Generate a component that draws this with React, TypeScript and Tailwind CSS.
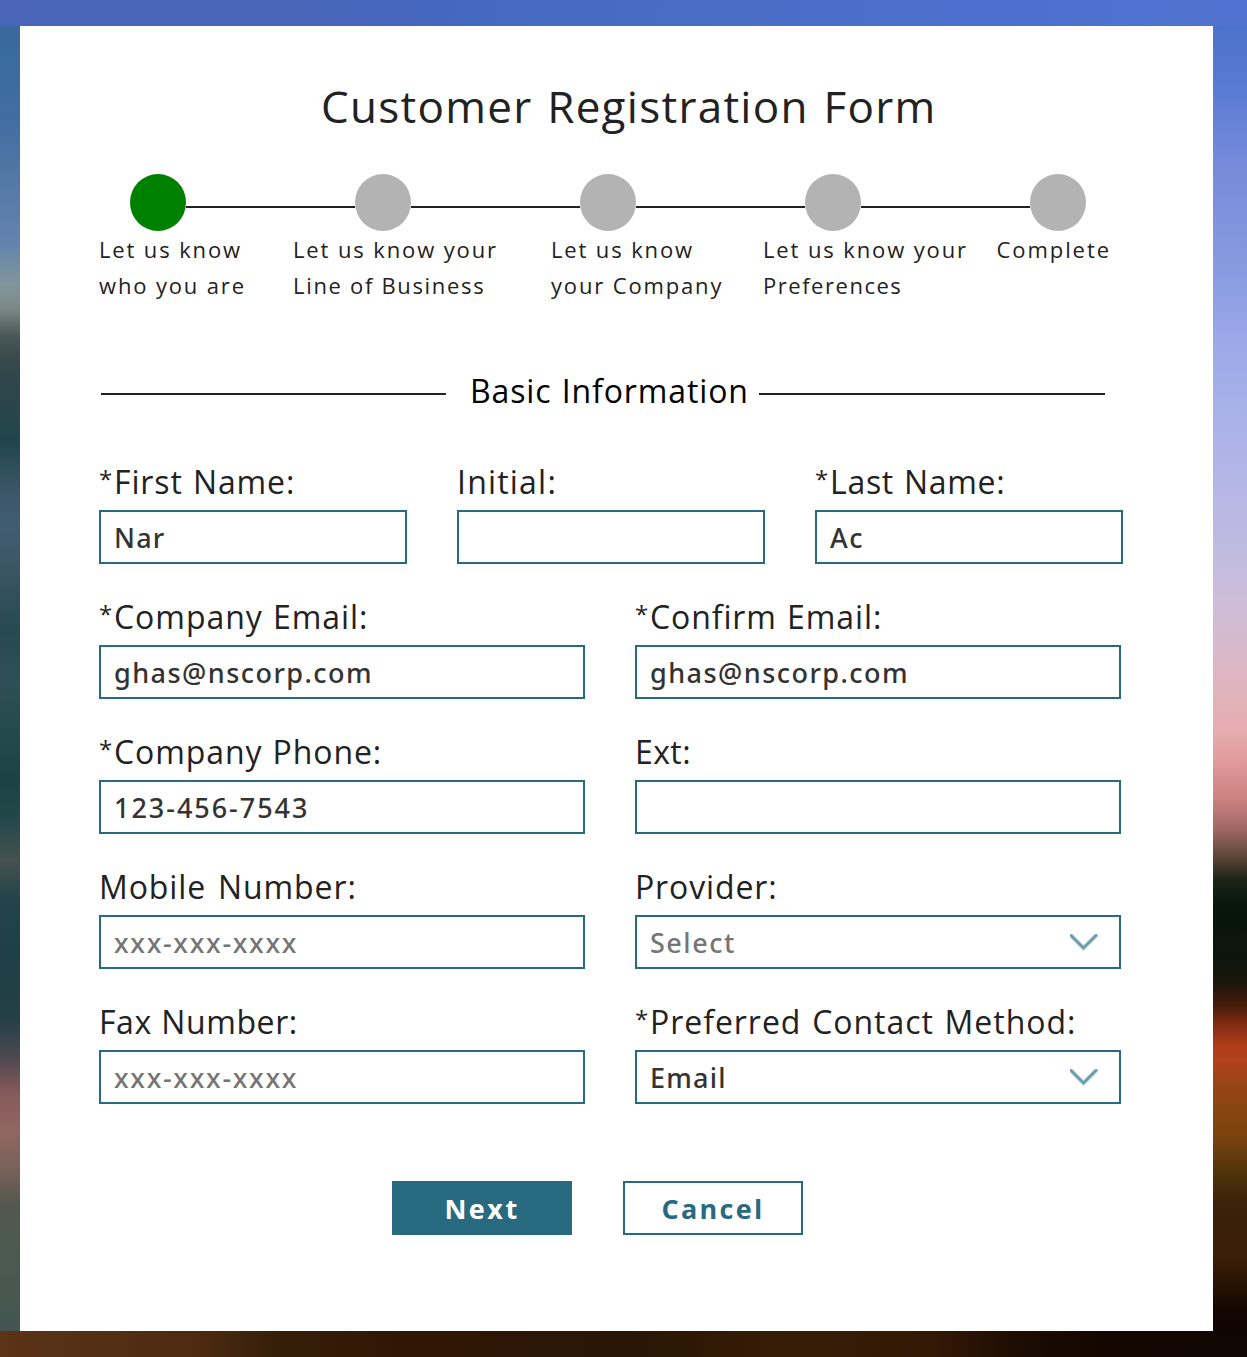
import React from "react";

const steps = [
  { lines: [["Let us know", "tracking-[1.87px]"], ["who you are", "tracking-[1.85px]"]], width: "w-[194px]" },
  { lines: [["Let us know your", "tracking-[1.88px]"], ["Line of Business", "tracking-[1.68px]"]], width: "w-[258px]" },
  { lines: [["Let us know", "tracking-[1.87px]"], ["your Company", "tracking-[1.85px]"]], width: "w-[212px]" },
  { lines: [["Let us know your", "tracking-[1.88px]"], ["Preferences", "tracking-[1.53px]"]], width: "w-[233.5px]" },
  { lines: [["Complete", "tracking-[1.93px]"]], width: "w-[130px]" },
];

function Chevron() {
  return (
    <svg width="28" height="17" viewBox="0 0 28 17" className="mt-px mr-[21px] shrink-0" fill="none">
      <path d="M0 0.5 L13.5 14 L27 0.5" stroke="#b4cdd6" strokeWidth="4.4" />
      <path d="M0 0.5 L13.5 14 L27 0.5" stroke="#6598ab" strokeWidth="2.2" />
    </svg>
  );
}

type FieldProps = {
  label: string;
  labelClass: string;
  required?: boolean;
  value?: string;
  placeholder?: string;
  select?: boolean;
  textClass?: string;
};

function Field({ label, labelClass, required, value = "", placeholder, select, textClass = "" }: FieldProps) {
  return (
    <label className="flex min-w-0 flex-1 flex-col gap-[6px]">
      <span className="flex h-11 text-[32px] leading-[44px] whitespace-nowrap text-[#222]">
        {required && <span className="relative -top-[3px] w-[15px] text-[24px]">*</span>}
        <span className={labelClass}>{label}</span>
      </span>
      <span className="flex h-[54px] items-center border-2 border-[#286a80] bg-white font-['Noto_Sans',sans-serif] text-[27px] font-medium">
        {select ? (
          <span className={`flex-1 pt-0.5 pl-[13px] leading-[50px] ${textClass}`}>{value || placeholder}</span>
        ) : (
          <input
            readOnly
            value={value}
            placeholder={placeholder}
            className={`h-[50px] w-full min-w-0 bg-transparent pt-px pl-[13px] leading-[48px] text-[#333] outline-none placeholder:text-[#757575] ${textClass}`}
          />
        )}
        {select && <Chevron />}
      </span>
    </label>
  );
}

export default function App() {
  return (
    <div className="flex h-[1357px] w-[1247px] flex-col overflow-hidden font-['Open_Sans',sans-serif]">
      <div className="h-[26px] bg-[linear-gradient(95deg,#4a65b7_0%,#4865b8_25%,#4568c2_38%,#4a6dc8_60%,#4d70ce_80%,#5073d0_100%)]" />
      <div className="flex h-[1305px]">
        <div className="w-5 bg-[linear-gradient(180deg,#39699c_0px,#416da2_90px,#5377a6_150px,#6283ae_215px,#82959a_260px,#7b8a86_282px,#4a5a58_309px,#3b4a4d_329px,#30464a_353px,#21454c_415px,#3c5668_465px,#415d70_500px,#3a5563_545px,#274a50_602px,#2e4f55_660px,#1a4345_755px,#25484a_795px,#45524e_834px,#22434a_875px,#1f4046_927px,#253f47_993px,#4c4850_1030px,#855a5b_1067px,#916762_1104px,#7a625a_1141px,#54584e_1178px,#4b5a51_1229px,#435550_1305px)]" />
        <main className="flex w-[1193px] flex-col bg-white pt-[50px] pl-[79px]">
          <h1 className="h-[60px] pl-[222px] text-[44px] leading-[60px] tracking-[1.28px] whitespace-nowrap text-[#222] [word-spacing:2px]">
            Customer Registration Form
          </h1>

          <div className="mt-[38px] flex h-[57px] items-center pl-[31px]">
            {steps.map((_, i) => (
              <React.Fragment key={i}>
                {i > 0 && <span className="mt-[9px] h-0.5 w-[169px] bg-[#222]" />}
                <span className={`h-[57px] w-14 rounded-[50%] ${i === 0 ? "bg-[#008000]" : "bg-[#b3b3b3]"}`} />
              </React.Fragment>
            ))}
          </div>

          <div className="flex h-[72px] text-[22px] leading-9 whitespace-nowrap text-[#222]">
            {steps.map((s, i) => (
              <div key={i} className={s.width}>
                {s.lines.map(([t, c]) => (
                  <div key={t} className={c}>{t}</div>
                ))}
              </div>
            ))}
          </div>

          <div className="mt-[66px] flex h-11 items-center pl-0.5">
            <span className="mt-1.5 h-0.5 w-[345px] bg-[#222]" />
            <h2 className="w-[313px] pl-6 text-[32px] leading-[44px] tracking-[0.88px] whitespace-nowrap text-black [word-spacing:1px]">
              Basic Information
            </h2>
            <span className="mt-1.5 h-0.5 w-[346px] bg-[#222]" />
          </div>

          <form className="mt-[47px] flex w-[1022px] flex-col gap-[31px]">
            <div className="flex w-[1024px] gap-[50px]">
              <Field required label="First Name:" labelClass="tracking-[0.88px] [word-spacing:1px]" value="Nar" textClass="tracking-[1.2px]" />
              <Field label="Initial:" labelClass="tracking-[1.2px]" />
              <Field required label="Last Name:" labelClass="tracking-[0.7px] [word-spacing:1px]" value="Ac" textClass="tracking-[1.5px]" />
            </div>
            <div className="flex gap-[50px]">
              <Field required label="Company Email:" labelClass="tracking-[0.95px] [word-spacing:1px]" value="ghas@nscorp.com" textClass="tracking-[1.46px]" />
              <Field required label="Confirm Email:" labelClass="tracking-[0.9px] [word-spacing:1px]" value="ghas@nscorp.com" textClass="tracking-[1.46px]" />
            </div>
            <div className="flex gap-[50px]">
              <Field required label="Company Phone:" labelClass="tracking-[0.9px] [word-spacing:1px]" value="123-456-7543" textClass="tracking-[1.97px]" />
              <Field label="Ext:" labelClass="tracking-[0.4px]" />
            </div>
            <div className="flex gap-[50px]">
              <Field label="Mobile Number:" labelClass="tracking-[0.92px] [word-spacing:2.5px]" placeholder="xxx-xxx-xxxx" textClass="tracking-[1.68px]" />
              <Field select label="Provider:" labelClass="tracking-[0.86px]" placeholder="Select" textClass="tracking-[1.5px] text-[#757575]" />
            </div>
            <div className="flex gap-[50px]">
              <Field label="Fax Number:" labelClass="tracking-[0.6px] [word-spacing:0.5px]" placeholder="xxx-xxx-xxxx" textClass="tracking-[1.68px]" />
              <Field required select label="Preferred Contact Method:" labelClass="tracking-[0.96px] [word-spacing:1.5px]" value="Email" textClass="tracking-[1.2px] text-[#333]" />
            </div>
          </form>

          <div className="mt-[77px] flex gap-[51px] pl-[293px] text-[27px] leading-[50px] font-bold">
            <button className="h-[54px] w-[180px] border-2 border-[#286a80] bg-[#286a80] pt-px tracking-[2.5px] text-white">Next</button>
            <button className="h-[54px] w-[180px] border-2 border-[#286a80] bg-white pt-px tracking-[2.3px] text-[#286a80]">Cancel</button>
          </div>
        </main>
        <div className="w-[34px] bg-[linear-gradient(180deg,#4c72cc_0px,#5a7bd3_63px,#7389da_130px,#8094dc_197px,#8a9ce1_251px,#9ba8e8_313px,#a6b1ea_376px,#b6b7e6_465px,#c1bcdf_532px,#cebdd8_577px,#d8b9cb_621px,#e0b4be_661px,#e5adb0_705px,#e39c9d_732px,#cc8080_773px,#9d6863_804px,#5c4638_831px,#1c2418_854px,#07150b_881px,#0d160d_931px,#1c160a_958px,#461c0b_980px,#802b12_998px,#b13d1a_1021px,#b2421a_1034px,#9a4517_1057px,#86460f_1084px,#7a430f_1111px,#50330c_1147px,#3b220a_1174px,#3b1e06_1233px,#2a1404_1255px,#100603_1287px,#100502_1305px)]" />
      </div>
      <div className="h-[26px] bg-[linear-gradient(90deg,#5b3317_0%,#4c2b10_16%,#351f08_22%,#301605_33%,#2a1605_51%,#371d05_64%,#331806_75%,#1c0c02_82%,#120600_90%,#100703_100%)]" />
    </div>
  );
}
